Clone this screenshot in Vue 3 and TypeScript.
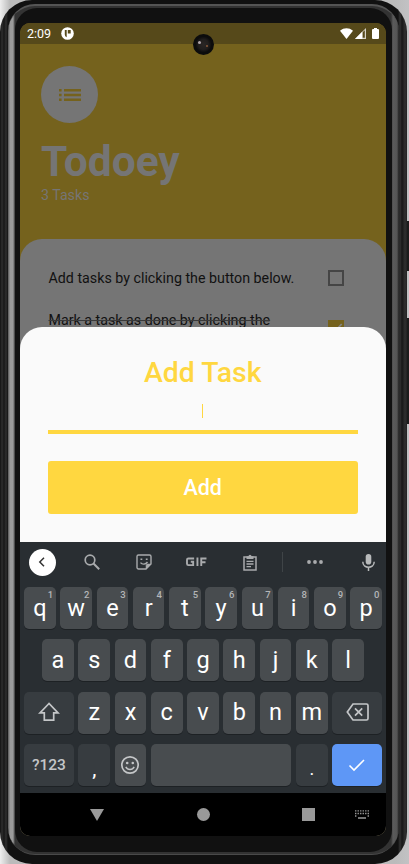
<script setup lang="ts">
import { ref } from 'vue'

interface Task {
  name: string
  done: boolean
}
interface Key {
  label: string
  hint?: string
}

const tasks = ref<Task[]>([
  { name: 'Add tasks by clicking the button below.', done: false },
  { name: 'Mark a task as done by clicking the', done: true },
])

const topRow: Key[] = [...'qwertyuiop'].map((label, i) => ({ label, hint: String((i + 1) % 10) }))
const homeRow = [...'asdfghjkl']
const bottomRow = [...'zxcvbnm']
</script>

<template>
  <div class="stage">
    <div class="volume power"></div>
    <div class="volume rocker"></div>
    <div class="phone">
      <div class="metal">
        <div class="bezel">
          <div class="screen">
            <div class="status">
              <span class="clock">2:09</span>
              <svg class="app-dot" viewBox="0 0 13 13">
                <circle cx="6.5" cy="6.5" r="6.3" fill="#fff" />
                <path d="M3.800 3h1.900v7.200q-1.900-.6-1.900-2.700zM6.800 3h2.900v3.500H6.800z" fill="#56491a" />
              </svg>
              <span class="fill"></span>
              <svg class="wifi" viewBox="0 0 13 11">
                <path d="M0 2.700C3.700-.6 9.300-.6 13 2.700L6.500 11z" fill="#fff" />
              </svg>
              <svg class="signal" viewBox="0 0 11 11">
                <path d="M0 11 11 0v11z" fill="#d5d1c5" />
                <path d="M7.400 4.600 9.800 2.200v7.600H7.400z" fill="#56491a" />
                <path d="M0 11 7.400 3.600V11z" fill="#fff" />
              </svg>
              <svg class="battery" viewBox="0 0 7 11">
                <path d="M2 0h3v1h1.300l.7.7v8.600l-.7.7H.7L0 10.300V1.700L.7 1H2z" fill="#fff" />
              </svg>
            </div>

            <header class="head">
              <div class="avatar">
                <svg viewBox="0 0 22 12">
                  <path d="M0 0h2.600v2.400H0zM5 0h17v2.400H5zM0 4.800h2.600v2.400H0zM5 4.800h17v2.400H5zM0 9.600h2.600V12H0zM5 9.600h17V12H5z" fill="#75621d" />
                </svg>
              </div>
              <h1>Todoey</h1>
              <p>3 Tasks</p>
            </header>

            <main class="list">
              <div v-for="task in tasks" :key="task.name" class="task" :class="{ done: task.done }">
                <span class="name">{{ task.name }}</span>
                <span class="box">
                  <svg v-if="task.done" viewBox="0 0 16 16">
                    <path d="M2.500 8.500 6.200 12 13.700 4" fill="none" stroke="#858585" stroke-width="1.800" />
                  </svg>
                </span>
              </div>
            </main>

            <div class="camera"><i></i><b></b></div>

            <div class="overlay">
              <section class="sheet">
                <h2>Add Task</h2>
                <div class="field"><span class="caret"></span></div>
                <button class="add">Add</button>
              </section>

              <section class="keyboard">
                <div class="tools">
                  <span class="back">
                    <svg width="8" height="10" viewBox="0 0 8 10"><path d="M6 .8 1.800 5 6 9.200" fill="none" stroke="#333" stroke-width="1.500" /></svg>
                  </span>
                  <svg class="t-search" viewBox="0 0 16 16">
                    <circle cx="6" cy="6" r="4.800" fill="none" stroke="#a9abad" stroke-width="1.700" />
                    <path d="m9.500 9.500 5.700 5.700" stroke="#a9abad" stroke-width="2" />
                  </svg>
                  <svg class="t-sticker" viewBox="0 0 16 16" fill="none" stroke="#a9abad" stroke-width="1.400">
                    <path d="M2.500 1h11A1.500 1.500 0 0 1 15 2.500V10l-5 5H2.500A1.500 1.500 0 0 1 1 13.500v-11A1.500 1.500 0 0 1 2.500 1z" />
                    <path d="M10 15v-3.500a1.500 1.500 0 0 1 1.500-1.500H15z" fill="#a9abad" stroke-width=".5" />
                    <path d="M4.500 5.300h1.800M9.800 5.300h1.800M4.500 8.600c1.800 2.300 5.200 2 7-.6" />
                  </svg>
                  <svg class="t-gif" viewBox="0 0 22 10" fill="none" stroke="#a9abad" stroke-width="2">
                    <path d="M8.500 1.500H2.500Q1 1.500 1 3v4q0 1.500 1.500 1.500h5V5H5M12 .5v9M16 9.500v-8h5.500M16 5.500h4.500" />
                  </svg>
                  <svg class="t-clip" viewBox="0 0 14 17">
                    <path d="M1 3h12v13H1z" fill="none" stroke="#a9abad" stroke-width="1.500" />
                    <path d="M3.500 2.200h2a1.500 1.500 0 0 1 3 0h2V5h-7z" fill="#a9abad" />
                    <path d="M3.500 7.300h7M3.500 10h7M3.500 12.700h4.500" stroke="#a9abad" stroke-width="1.300" />
                  </svg>
                  <span class="divider"></span>
                  <svg class="t-more" viewBox="0 0 16 4" fill="#a9abad">
                    <circle cx="2" cy="2" r="1.900" /><circle cx="8" cy="2" r="1.900" /><circle cx="14" cy="2" r="1.900" />
                  </svg>
                  <svg class="t-mic" viewBox="0 0 13 17">
                    <rect x="3.700" y="0" width="5.600" height="10.500" rx="2.800" fill="#b8babb" />
                    <path d="M.8 7.800c0 7.200 11.400 7.200 11.400 0M6.500 13v4" fill="none" stroke="#b8babb" stroke-width="1.500" />
                  </svg>
                </div>

                <div class="keys">
                  <div class="row">
                    <span v-for="key in topRow" :key="key.label" class="key">{{ key.label }}<sup>{{ key.hint }}</sup></span>
                  </div>
                  <div class="row">
                    <span v-for="label in homeRow" :key="label" class="key">{{ label }}</span>
                  </div>
                  <div class="row">
                    <span class="key wide dark">
                      <svg width="22" height="20" viewBox="0 0 22 20">
                        <path d="M11 1.500 2 10.800h4.300v7.400h9.400v-7.400H20z" fill="none" stroke="#c4c6c8" stroke-width="1.700" />
                      </svg>
                    </span>
                    <span v-for="label in bottomRow" :key="label" class="key">{{ label }}</span>
                    <span class="key wide dark">
                      <svg width="23" height="18" viewBox="0 0 23 18" fill="none" stroke="#c4c6c8" stroke-width="1.700">
                        <path d="M7 1h13.500Q22 1 22 2.500v13q0 1.500-1.500 1.500H7L1.300 9zM9 5.400l7.200 7.200M16.200 5.400 9 12.600" />
                      </svg>
                    </span>
                  </div>
                  <div class="row">
                    <span class="key wide dark symbols">?123</span>
                    <span class="key dark comma">,</span>
                    <span class="key">
                      <svg width="20" height="20" viewBox="0 0 20 20">
                        <circle cx="10" cy="10" r="8.200" fill="none" stroke="#c4c6c8" stroke-width="1.700" />
                        <circle cx="7.200" cy="8" r="1.300" fill="#c4c6c8" /><circle cx="12.800" cy="8" r="1.300" fill="#c4c6c8" />
                        <path d="M5.800 11.800c1.800 3.500 6.600 3.500 8.400 0" fill="none" stroke="#c4c6c8" stroke-width="1.500" />
                      </svg>
                    </span>
                    <span class="key space"></span>
                    <span class="key dark period">.</span>
                    <span class="key wide enter">
                      <svg width="18" height="14" viewBox="0 0 18 14"><path d="m1.500 7.500 4.500 4.500L16 2" fill="none" stroke="#fff" stroke-width="1.600" /></svg>
                    </span>
                  </div>
                </div>
              </section>

              <nav class="nav">
                <svg class="n-back" viewBox="0 0 14 12"><path d="M0 0h14L7 12z" fill="#999" /></svg>
                <span class="n-home"></span>
                <span class="n-recent"></span>
                <svg class="n-kb" viewBox="0 0 14 9">
                  <path d="M0 .8h14M0 3.500h14" stroke="#999" stroke-width="1.300" stroke-dasharray="1.400 1.120" />
                  <path d="M0 6h1.400M12.600 6H14M3 8h8" stroke="#999" stroke-width="1.300" />
                </svg>
              </nav>
            </div>
          </div>
        </div>
      </div>
    </div>
  </div>
</template>

<style>
body {
  margin: 0;
  background: #d2d2d2;
}
</style>

<style scoped>
* {
  box-sizing: border-box;
}
.stage {
  position: relative;
  width: 409px;
  height: 864px;
  overflow: hidden;
  font-family: Roboto, sans-serif;
  background: linear-gradient(90deg, #eee 0, #bbb 10px, #bbb 395px, #c2c2c4 409px);
}
.volume {
  position: absolute;
  left: 404px;
  width: 5px;
  background: #1c1c1c;
}
.power {
  top: 221px;
  height: 50px;
}
.rocker {
  top: 318px;
  height: 106px;
}
.phone {
  position: relative;
  width: 407px;
  height: 864px;
  padding: 4px 8px 9px;
  border-radius: 32px;
  background: linear-gradient(90deg, #111 0, #2e2e2e 2px, #161616 4px, #303030 6px, #111 8px, #111 398px, #333 400px, #171717 402px, #303030 405px, #222 407px);
}
.metal {
  height: 851px;
  padding: 2px 7px;
  border-radius: 27px;
  border-top: 2px solid #555;
  border-bottom: 1px solid #4a4a4a;
  background: linear-gradient(90deg, #555 0, #999 2px, #9b9b9b 5px, #333 7px, #333 383px, #5b5b5b 385px, #555 389px, #222 391px);
}
.bezel {
  height: 844px;
  padding: 15px 5px 16px;
  border-radius: 22px;
  background: #111;
}
.screen {
  position: relative;
  width: 366px;
  height: 813px;
  overflow: hidden;
  border-radius: 10px;
  background: #75621d;
}
.status {
  display: flex;
  align-items: center;
  height: 21px;
  padding: 0 7px;
  background: #56491a;
  color: #fff;
}
.clock {
  width: 34px;
  font-size: 12.500px;
  line-height: 22px;
  padding-top: 1px;
}
.app-dot {
  width: 13px;
  height: 13px;
}
.fill {
  flex: 1;
}
.wifi {
  width: 13px;
  height: 11px;
  margin-right: 2px;
}
.signal {
  width: 11px;
  height: 11px;
  margin-right: 6px;
}
.battery {
  width: 7px;
  height: 11px;
}
.head {
  height: 195px;
  padding: 22px 21px 0;
  color: #757575;
}
.avatar {
  display: grid;
  place-items: center;
  width: 57px;
  height: 57px;
  border-radius: 50%;
  background: #757575;
}
.avatar svg {
  width: 22px;
  height: 12px;
}
h1 {
  margin: 14px 0 0;
  font-size: 42.500px;
  font-weight: 700;
  line-height: 50px;
}
.head p {
  margin: 0;
  font-size: 14.200px;
  line-height: 17px;
}
.list {
  height: 600px;
  padding: 19px 42px 0 28.500px;
  border-radius: 22px 22px 0 0;
  background: #757575;
}
.task {
  display: flex;
  justify-content: space-between;
  height: 41px;
  color: #111;
  font-size: 14.250px;
  line-height: 41px;
  white-space: nowrap;
}
.task.done {
  height: 60px;
  line-height: 42px;
}
.done .name {
  text-decoration: line-through #3a3a3a 1px;
}
.box {
  width: 16px;
  height: 16px;
  margin-top: 12px;
  border: 2px solid #454545;
}
.done .box {
  margin-top: 21px;
  border: 0;
  background: #75621d;
}
.box svg {
  display: block;
}
.camera {
  position: absolute;
  top: 11px;
  left: 173px;
  width: 21px;
  height: 21px;
  border-radius: 50%;
  background: radial-gradient(circle, #2a2625 0, #211e1d 5px, #0c0c0c 8px);
}
.camera i,
.camera b {
  position: absolute;
  top: 7px;
  left: 5px;
  width: 3px;
  height: 3px;
  border-radius: 50%;
  background: #b0a4aa;
}
.camera b {
  top: 11px;
  left: 13px;
  width: 2px;
  height: 2px;
  background: #8b5a3a;
}
.overlay {
  position: absolute;
  inset: 304px 0 0;
}
.sheet {
  height: 215px;
  padding: 29px 28.500px 0 28px;
  border-radius: 22px 22px 0 0;
  background: #fafafa;
  text-align: center;
}
h2 {
  margin: 0;
  color: #ffd740;
  font-size: 28.400px;
  font-weight: 500;
  line-height: 34px;
}
.field {
  display: flex;
  justify-content: center;
  height: 44px;
  padding-top: 14px;
  border-bottom: 4px solid #ffd740;
}
.caret {
  width: 1px;
  height: 14px;
  background: #ffd740;
}
.add {
  display: block;
  width: 100%;
  height: 53px;
  margin-top: 27px;
  padding: 0;
  border: 0;
  border-radius: 3px;
  background: #ffd740;
  color: #fff;
  font: 500 21.500px/53px Roboto, sans-serif;
}
.keyboard {
  height: 251px;
  background: #292e32;
}
.tools {
  display: flex;
  align-items: center;
  height: 45px;
  padding: 0 11px 5px 8.500px;
}
.back {
  display: grid;
  place-items: center;
  width: 27px;
  height: 27px;
  margin-right: 28px;
  border-radius: 50%;
  background: #fff;
}
.t-search {
  width: 16px;
  height: 16px;
  margin-right: 36.500px;
}
.t-sticker {
  width: 16px;
  height: 16px;
  margin-right: 34px;
}
.t-gif {
  width: 21px;
  height: 9.500px;
  margin-right: 36px;
}
.t-clip {
  width: 14px;
  height: 17px;
  margin-right: 25px;
}
.divider {
  width: 1px;
  height: 20px;
  margin-right: 24px;
  background: #3f4447;
}
.t-more {
  width: 16px;
  height: 4px;
  margin-right: auto;
}
.t-mic {
  width: 13px;
  height: 17px;
}
.keys {
  display: flex;
  flex-direction: column;
  gap: 10.400px;
  padding: 0 4px;
}
.row {
  display: flex;
  justify-content: center;
  gap: 4.670px;
}
.key {
  position: relative;
  display: flex;
  flex: none;
  align-items: center;
  justify-content: center;
  width: 31.600px;
  height: 42px;
  border-radius: 5px;
  background: #484c4f;
  box-shadow: 0 1px 0 #1d2124;
  color: #fff;
  font-size: 23.500px;
  line-height: 40px;
  padding-bottom: 1px;
}
sup {
  position: absolute;
  top: 2px;
  right: 2.500px;
  color: #b4b6b8;
  font-size: 9.500px;
  font-weight: 500;
  line-height: 11px;
}
.dark {
  background: #373c40;
}
.wide {
  flex: 1;
}
.space {
  width: 140.400px;
}
.row .enter,
.row .symbols {
  flex: 1;
}
.symbols {
  color: #c4c6c8;
  font-size: 15.500px;
  font-weight: 500;
  padding-bottom: 0;
}
.comma,
.period {
  padding-top: 8px;
}
.comma {
  font-size: 21px;
}
.period {
  font-size: 18px;
}
.enter {
  background: #5e97f6;
}
.nav {
  display: flex;
  align-items: center;
  height: 43px;
  padding-left: 70px;
  background: #000;
}
.n-back {
  width: 14px;
  height: 12px;
  margin-right: 92.500px;
}
.n-home {
  width: 13px;
  height: 13px;
  margin-right: 92.500px;
  border-radius: 50%;
  background: #999;
}
.n-recent {
  width: 13px;
  height: 13px;
  margin-right: 39.500px;
  background: #999;
}
.n-kb {
  width: 14px;
  height: 9px;
}
</style>
